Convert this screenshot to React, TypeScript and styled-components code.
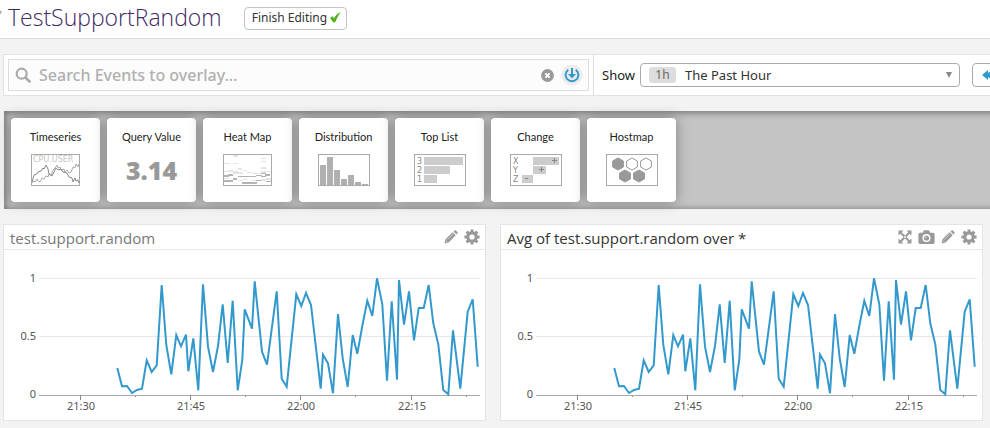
import React from 'react';
import styled, { createGlobalStyle } from 'styled-components';

const GlobalStyle = createGlobalStyle`
  * { box-sizing: border-box; }
  body {
    margin: 0;
    background: #f3f3f3;
    font-family: "Noto Sans", "Open Sans", sans-serif;
    color: #333;
    overflow-x: hidden;
  }
  button, input, select { font-family: inherit; color: inherit; margin: 0; }
`;

const Header = styled.header`
  display: flex;
  align-items: center;
  height: 39px;
  padding-bottom: 2px;
  background: #fff;
  border-bottom: 1px solid #ddd;
`;

const BackLink = styled.a`
  display: flex;
  width: 8px;
  padding-bottom: 10px;
`;

const Title = styled.h1`
  margin: 0 22px 0 0;
  padding-bottom: 3px;
  font: 300 23px/32px "Open Sans", sans-serif;
  color: #3f2a63;
`;

const FinishButton = styled.button`
  display: flex;
  align-items: center;
  gap: 3px;
  height: 23px;
  padding: 0 5px 2px 7px;
  font-size: 12px;
  background: #fff;
  border: 1px solid #c4c4c4;
  border-radius: 4px;
`;

const Toolbar = styled.div`
  display: flex;
  height: 42px;
  margin: 15px 0 0 3px;
  background: #fff;
  border: 1px solid #e2e2e2;
  border-right: 0;
`;

const SearchCell = styled.div`
  flex: 1;
  display: flex;
  padding: 4px;
  border-right: 1px solid #ddd;
`;

const SearchBox = styled.div`
  flex: 1;
  display: flex;
  align-items: center;
  padding: 0 5px 0 6px;
  background: #fcfcfc;
  border: 1px solid #ddd;
`;

const SearchInput = styled.input`
  flex: 1;
  min-width: 0;
  height: 28px;
  padding: 0 0 0 8px;
  font-size: 16px;
  font-weight: 500;
  background: none;
  border: 0;
  outline: 0;
  &::placeholder { color: #b0b0b0; opacity: 1; }
`;

const IconButton = styled.button`
  display: flex;
  padding: 0;
  background: none;
  border: 0;
  color: #999;
`;

const SearchActions = styled.div`
  display: flex;
  align-items: center;
  gap: 7px;
`;

const TimeCell = styled.div`
  flex: 0 0 396px;
  display: flex;
  align-items: center;
  padding-left: 8px;
  overflow: hidden;
`;

const ShowLabel = styled.label`
  flex: 0 0 38px;
  font-size: 13px;
  color: #222;
`;

const SelectBox = styled.div`
  flex: 0 0 320px;
  display: flex;
  align-items: center;
  height: 24px;
  margin-right: 12px;
  padding: 0 6px 0 8px;
  border: 1px solid #aaa;
  border-radius: 4px;
`;

const RangeBadge = styled.span`
  width: 27px;
  margin-right: 9px;
  font-size: 12px;
  line-height: 16px;
  text-align: center;
  color: #666;
  background: #ddd;
  border-radius: 3px;
`;

const RangeSelect = styled.select`
  flex: 1;
  appearance: none;
  padding: 0;
  font-size: 13px;
  background: none;
  border: 0;
  outline: 0;
`;

const PrevButton = styled.button`
  flex: 0 0 36px;
  display: flex;
  align-items: center;
  height: 24px;
  padding: 0 8px;
  background: #fff;
  border: 1px solid #aaa;
  border-radius: 4px;
`;

const Palette = styled.section`
  display: flex;
  gap: 7px;
  margin: 15px -8px 0 4px;
  padding: 7px;
  background: #c4c4c4;
  box-shadow: inset 1px 1px 6px 1px #777;
`;

const PaletteCard = styled.button`
  flex: 0 0 89px;
  display: flex;
  flex-direction: column;
  align-items: center;
  gap: 8px;
  height: 84px;
  padding: 11px 0 0;
  font-family: Lato, sans-serif;
  font-size: 11px;
  line-height: 16px;
  color: #222;
  background: #fff;
  border: 0;
  border-radius: 4px;
  box-shadow: 0 0 14px rgba(0, 0, 0, 0.35);
`;

const Thumb = styled.span`
  display: flex;
  align-items: center;
  justify-content: center;
  height: 34px;
`;

const BigNumber = styled.span`
  font: 800 25px/34px "Open Sans", sans-serif;
  color: #999;
`;

const Boards = styled.main`
  display: grid;
  grid-template-columns: 1fr 1fr;
  gap: 14px;
  padding: 15px 7px 7px 3px;
`;

const Panel = styled.article`
  background: #fff;
  border: 1px solid #e4e4e4;
`;

const PanelHead = styled.div`
  display: flex;
  align-items: center;
  height: 25px;
  padding: 0 5px 0 6px;
  border-bottom: 1px solid #e8e8e8;
`;

const PanelTitle = styled.h2<{ $active?: boolean }>`
  flex: 1;
  margin: 0;
  padding-top: 1px;
  font: 400 15px/20px "Open Sans", sans-serif;
  color: ${(p) => (p.$active ? '#333' : '#777')};
`;

const PanelTools = styled.div`
  display: flex;
  align-items: center;
  gap: 6px;
`;

const ChartSvg = styled.svg`
  display: block;
  width: 100%;
  height: auto;
`;

const AxisText = styled.text`
  font: 11px "Noto Sans", sans-serif;
  fill: #555;
`;

const CheckIcon = () => (
  <svg width="11" height="11" viewBox="0 0 11 11" aria-hidden="true">
    <path d="M0 6 2.400 4.200 4.100 6.200C5.600 3.500 7.600 1.400 10.800 0 8.600 3 6.800 6.200 5.200 10.300L3 10.300C2.200 8.600 1.300 7.300 0 6Z" fill="#4db31c" />
  </svg>
);

const SearchIcon = () => (
  <svg width="16" height="16" viewBox="0 0 16 16" fill="none" stroke="#aaa" aria-hidden="true">
    <circle cx="6.700" cy="6.700" r="5" strokeWidth="2.200" />
    <path d="m10.500 10.500 4 4" strokeWidth="2.600" strokeLinecap="round" />
  </svg>
);

const ClearIcon = () => (
  <svg width="13" height="13" viewBox="0 0 13 13" aria-hidden="true">
    <circle cx="6.500" cy="6.500" r="6.400" fill="#999" />
    <path d="m4.400 4.400 4.200 4.200m0-4.200-4.200 4.200" stroke="#fff" strokeWidth="2" />
  </svg>
);

const OverlayIcon = () => (
  <svg width="22" height="22" viewBox="0 0 22 22" fill="none" stroke="#3399cc" aria-hidden="true">
    <circle cx="11" cy="11" r="10.500" fill="#ececec" stroke="none" />
    <path d="M7.300 5.700A6.400 6.400 0 1 0 14.700 5.700" strokeWidth="2" />
    <path d="M11 4v8" strokeWidth="2" />
    <path d="M7 10h8l-4 4.500Z" fill="#3399cc" stroke="none" />
  </svg>
);

const PencilIcon = () => (
  <svg width="14" height="14" viewBox="0 0 14 14" aria-hidden="true">
    <path fill="currentColor" d="M.5 13.500 1.500 9.300 8.700 2.300 11.700 5.300 4.600 12.500ZM9.500 1.500 10.600.5Q11.200 0 11.900.6L13.400 2.100Q14 2.800 13.400 3.400L12.500 4.500Z" />
    <path d="m3.300 9.800 5.800-5.700" stroke="#ddd" strokeWidth=".8" />
    <path d="m1.800 10.600 1.700 1.700" stroke="#eee" strokeWidth=".7" />
  </svg>
);

const GearIcon = () => (
  <svg width="16" height="16" viewBox="0 0 16 16" fill="none" stroke="currentColor" aria-hidden="true">
    <circle cx="8" cy="8" r="4.200" strokeWidth="3.200" />
    {[0, 45, 90, 135].map((a) => (
      <path key={a} d="M8 .4V3.600M8 12.400v3.200" strokeWidth="3" transform={`rotate(${a} 8 8)`} />
    ))}
  </svg>
);

const CameraIcon = () => (
  <svg width="17" height="15" viewBox="0 0 17 15" aria-hidden="true">
    <path fill="currentColor" d="M2 2.800h2.700L5.700.6Q5.900.2 6.500.2h4q.6 0 .8.5l1 2.100H15q1.600 0 1.600 1.700v7.700q0 1.700-1.600 1.700H2Q.4 13.900.4 12.200V4.500Q.4 2.800 2 2.800Z" />
    <circle cx="8.500" cy="8" r="3.300" fill="none" stroke="#fff" strokeWidth="1.500" />
    <path d="M7.100 8.200A1.400 1.400 0 0 1 8.500 6.700" fill="none" stroke="#fff" strokeWidth=".7" />
  </svg>
);

const ExpandIcon = () => (
  <svg width="14" height="14" viewBox="0 0 14 14" aria-hidden="true">
    <path d="m2 2 10 10M12 2 2 12" stroke="currentColor" strokeWidth="2" />
    <path fill="currentColor" d="M.5.5h5l-5 5ZM13.500.5v5l-5-5ZM13.500 13.500h-5l5-5ZM.5 13.500v-5l5 5Z" />
    <circle cx="7" cy="7" r=".9" fill="#fff" />
  </svg>
);

const frame = { fill: '#fff', stroke: '#aaa' };

const TimeseriesThumb = () => (
  <svg width="49" height="32" viewBox="0 0 49 32" aria-hidden="true">
    <rect x=".5" y=".5" width="48" height="31" {...frame} />
    <text x="2" y="8" fontFamily="DejaVu Sans" fontSize="8" fill="#c4c4c4">CPU.USER</text>
    <path d="m1 29 2-2 1 1 2-3 1 2 2 1 2-4 2 1 2-3 2 1 1-3 2 1 2-5 2-2 2-3 1 3 2-1 1 3 3-1 1 3 2-2 2 3 2-1 2-5 2 1 1-4 2 3 1-3" fill="none" stroke="#aaa" />
    <path d="m1 28 2-7 3-1 1-2 3-1 2-3 1 1 2-4 2 4 1 5 3 2 2-4 2-4 2 2 3-1 2 3 4 1 2 4 3 1 1 4 2-4 1 3 2-1 1 3" fill="none" stroke="#888" />
  </svg>
);

const heatCells = [
  [1, 9, 6, 1], [10, 1, 5, 2], [10, 9, 5, 1], [15, 14, 4, 2], [38, 4, 5, 1], [38, 7, 5, 1], [38, 13, 5, 2],
  [1, 17, 5, 1], [6, 16, 4, 2], [10, 17, 5, 3], [15, 18, 5, 2], [20, 16, 4, 1], [24, 18, 5, 1], [29, 19, 9, 1],
  [38, 17, 5, 2], [43, 17, 5, 1], [1, 24, 5, 1], [15, 26, 5, 1], [20, 25, 5, 1], [29, 26, 5, 1], [38, 25, 5, 2], [43, 24, 5, 2],
];
const heatDark = [
  [1, 21, 5, 2], [5, 20, 5, 2], [1, 26, 9, 2], [10, 24, 4, 2], [15, 22, 18, 1], [19, 28, 15, 2],
  [33, 21, 6, 1], [33, 26, 5, 1], [38, 19, 5, 1], [38, 22, 5, 1], [42, 20, 5, 2], [43, 27, 5, 1],
];

const HeatThumb = () => (
  <svg width="49" height="32" viewBox="0 0 49 32" aria-hidden="true">
    <rect x=".5" y=".5" width="48" height="31" {...frame} />
    {heatCells.map(([x, y, w, h]) => <rect key={`${x}-${y}`} x={x} y={y} width={w} height={h} fill="#e4e4e4" />)}
    {heatDark.map(([x, y, w, h]) => <rect key={`${x}-${y}`} x={x} y={y} width={w} height={h} fill="#b4b4b4" />)}
  </svg>
);

const DistributionThumb = () => (
  <svg width="52" height="32" viewBox="0 0 52 32" aria-hidden="true">
    <rect x=".5" y=".5" width="51" height="31" {...frame} />
    {[20, 28, 15, 6, 10, 3, 1].map((h, i) => (
      <rect key={i} x={2 + i * 7} y={31 - h} width="6" height={h} fill="#b0b0b0" />
    ))}
  </svg>
);

const ThumbText = styled.text`
  font: 8px "DejaVu Sans", sans-serif;
  fill: #888;
`;

const TopListThumb = () => (
  <svg width="52" height="32" viewBox="0 0 52 32" aria-hidden="true">
    <rect x=".5" y=".5" width="51" height="31" {...frame} />
    {[39, 26, 13].map((w, i) => (
      <g key={w}>
        <ThumbText x="3" y={10 + i * 9}>{3 - i}</ThumbText>
        <rect x="10" y={3 + i * 9} width={w} height="8" fill="#ccc" />
      </g>
    ))}
  </svg>
);

const changes = [
  { name: 'X', x: 23, w: 26, sign: 'M42 6.500h5M44.500 4v5' },
  { name: 'Y', x: 23, w: 13, sign: 'M29 15.500h5M31.500 13v5' },
  { name: 'Z', x: 12, w: 11, sign: 'M15 24.500h3' },
];

const ChangeThumb = () => (
  <svg width="52" height="32" viewBox="0 0 52 32" aria-hidden="true">
    <rect x=".5" y=".5" width="51" height="31" {...frame} />
    {changes.map((c, i) => (
      <g key={c.name}>
        <ThumbText x="3" y={10 + i * 9}>{c.name}</ThumbText>
        <rect x={c.x} y={3 + i * 9} width={c.w} height="8" fill="#ccc" />
        <path d={c.sign} stroke="#888" />
      </g>
    ))}
  </svg>
);

const hexes = [
  { x: 12, y: 10, solid: true }, { x: 26, y: 10, solid: false }, { x: 40, y: 10, solid: false },
  { x: 19, y: 22, solid: true }, { x: 33, y: 22, solid: true },
];

const HostmapThumb = () => (
  <svg width="52" height="32" viewBox="0 0 52 32" aria-hidden="true">
    <rect x=".5" y=".5" width="51" height="31" {...frame} />
    {hexes.map((h) => (
      <path key={`${h.x}-${h.y}`} d={`M${h.x} ${h.y - 6}l5.400 3v6l-5.400 3-5.400-3v-6Z`} fill={h.solid ? '#999' : '#fff'} stroke="#999" />
    ))}
  </svg>
);

const widgets = [
  { name: 'Timeseries', thumb: <TimeseriesThumb /> },
  { name: 'Query Value', thumb: <BigNumber>3.14</BigNumber> },
  { name: 'Heat Map', thumb: <HeatThumb /> },
  { name: 'Distribution', thumb: <DistributionThumb /> },
  { name: 'Top List', thumb: <TopListThumb /> },
  { name: 'Change', thumb: <ChangeThumb /> },
  { name: 'Hostmap', thumb: <HostmapThumb /> },
];

const series = `117.3,368 122,386.3 127,386 132,393 137,390 142,388.7 146.7,360.3 151.7,372 156.7,365.3 161.7,285
166.3,345 171.3,374.3 176.3,335 181,346.3 186,334.7 188.3,371.3 193.3,338.3 198.3,390.3 203,284.3 208,346.7
213,372 218,346 222.7,304.3 227.7,363 232.7,300.7 237.7,390.3 242.3,360 244.7,309.3 252,328.7 254.7,281.3
262,351.7 267,364.7 276.7,291.3 281.7,378.7 286.7,386.7 296.3,294.3 301.3,306 306,293 311,305 320.7,388.7
323,354.7 328,363.3 333,393.3 338,314 342.7,358.3 347.7,387 352.7,335 357.3,353.7 362.3,326 367.3,300.7
372.3,316 377,278.3 382.3,304.3 387,380.7 391.7,301.3 397,379.7 399,280 404,324.7 409,291.3 414,340.3
418.7,308 423.7,308 428.7,285 433.3,323.3 438.3,344.3 443.3,390 448.3,394.3 453,330.3 460.3,388.7
467.7,311.7 472.7,299.3 477.7,366.7`;

const yTicks = [['1', 278], ['0.5', 336], ['0', 394]] as const;
const xTicks = [['21:30', 80], ['21:45', 190], ['22:00', 300], ['22:15', 411]] as const;

const Chart = ({ label }: { label: string }) => (
  <ChartSvg viewBox="4 250 481 170" role="img" aria-label={label}>
    <path d="M39 278.500H480M39 336.500H480" stroke="#e8e8e8" />
    <path d="M39 395.500H480" stroke="#aaa" />
    {yTicks.map(([t, y]) => <AxisText key={t} x="36" y={y + 4} textAnchor="end">{t}</AxisText>)}
    {xTicks.map(([t, x]) => (
      <g key={t}>
        <path d={`M${x + 0.5} 395v5`} stroke="#888" />
        <path d={`M${x + 55.5} 396v1`} stroke="#888" />
        <AxisText x={x + 1} y="410" textAnchor="middle">{t}</AxisText>
      </g>
    ))}
    <polyline points={series} fill="none" stroke="#3399cc" strokeWidth="2" />
  </ChartSvg>
);

export default function App() {
  return (
    <>
      <GlobalStyle />
      <Header>
        <BackLink href="#" aria-label="Back">
          <svg width="2" height="4" viewBox="0 0 2 4"><path d="M0 0h2L0 4Z" fill="#aaa" /></svg>
        </BackLink>
        <Title>TestSupportRandom</Title>
        <FinishButton>Finish Editing<CheckIcon /></FinishButton>
      </Header>
      <Toolbar>
        <SearchCell>
          <SearchBox>
            <SearchIcon />
            <SearchInput type="text" aria-label="Search events" placeholder="Search Events to overlay…" />
            <SearchActions>
              <IconButton aria-label="Clear search"><ClearIcon /></IconButton>
              <IconButton aria-label="Overlay events"><OverlayIcon /></IconButton>
            </SearchActions>
          </SearchBox>
        </SearchCell>
        <TimeCell>
          <ShowLabel htmlFor="range">Show</ShowLabel>
          <SelectBox>
            <RangeBadge>1h</RangeBadge>
            <RangeSelect id="range"><option>The Past Hour</option></RangeSelect>
            <svg width="8" height="8" viewBox="0 0 8 8" aria-hidden="true"><path d="M1 1h6L4 7Z" fill="#888" /></svg>
          </SelectBox>
          <PrevButton aria-label="Previous period">
            <svg width="18" height="12" viewBox="0 0 18 12" aria-hidden="true"><path d="M1 6 7 1v3l4-3v10L7 8v3Z" fill="#3399cc" /></svg>
          </PrevButton>
        </TimeCell>
      </Toolbar>
      <Palette>
        {widgets.map((w) => (
          <PaletteCard key={w.name}>
            {w.name}
            <Thumb>{w.thumb}</Thumb>
          </PaletteCard>
        ))}
      </Palette>
      <Boards>
        <Panel>
          <PanelHead>
            <PanelTitle>test.support.random</PanelTitle>
            <PanelTools>
              <IconButton aria-label="Edit"><PencilIcon /></IconButton>
              <IconButton aria-label="Settings"><GearIcon /></IconButton>
            </PanelTools>
          </PanelHead>
          <Chart label="test.support.random" />
        </Panel>
        <Panel>
          <PanelHead>
            <PanelTitle $active>Avg of test.support.random over *</PanelTitle>
            <PanelTools>
              <IconButton aria-label="Full screen"><ExpandIcon /></IconButton>
              <IconButton aria-label="Snapshot"><CameraIcon /></IconButton>
              <IconButton aria-label="Edit"><PencilIcon /></IconButton>
              <IconButton aria-label="Settings"><GearIcon /></IconButton>
            </PanelTools>
          </PanelHead>
          <Chart label="Avg of test.support.random over *" />
        </Panel>
      </Boards>
    </>
  );
}
